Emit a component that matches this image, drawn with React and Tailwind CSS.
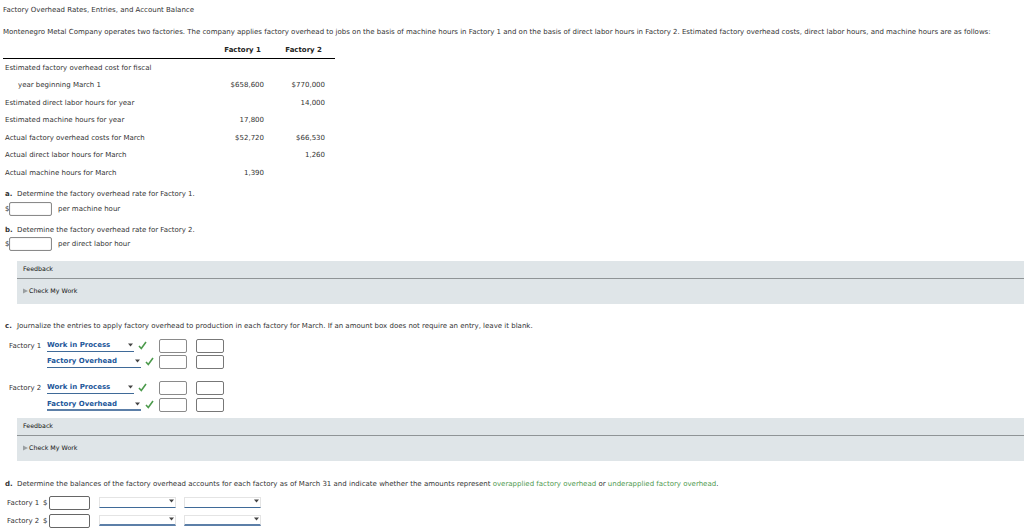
function Row({ label, a, b, indent }) {
  return (
    <div className="grid grid-cols-[200px_61px_61px] h-[17.5px] items-center">
      <span className={indent ? "pl-[15px]" : "pl-[2px]"}>{label}</span>
      <span className="text-right">{a}</span>
      <span className="text-right">{b}</span>
    </div>
  );
}

function Input() {
  return <span className="inline-block w-[43px] h-[14px] border border-[#8a8a8a] rounded-[2px] bg-white shadow-[inset_0_0_1px_#aaa]" />;
}

function Feedback() {
  return (
    <div className="ml-[17px] h-[43px] bg-[#dfe5e8] text-[#111]">
      <div className="h-[18px] pl-[6px] flex items-center border-b border-[#8f9496] text-[6.3px]">Feedback</div>
      <div className="h-[24px] pl-[6px] flex items-center gap-[1px] text-[6.3px]">
        <svg width="5" height="6" viewBox="0 0 5 6"><path d="M0 0.5L5 3L0 5.5Z" fill="#9a9fa1" /></svg>
        <span>Check My Work</span>
      </div>
    </div>
  );
}

function Account({ label, first, indent, thick }) {
  return (
    <div className="flex items-center h-[16px]">
      <span className="w-[47px] pl-[9px] text-[#333]">{first}</span>
      <span className={`${indent ? "w-[94px]" : "w-[87px]"} h-[13px] ${thick ? "border-b-2 border-[#5c7fa8]" : "border-b-[1.5px] border-[#3f6a98]"} text-[#23579a] font-bold flex items-center justify-between`}>
        <span>{label}</span>
        <svg width="5" height="4" viewBox="0 0 5 4" className="mr-[1px]"><path d="M0 0.5H5L2.5 3.5Z" fill="#444" /></svg>
      </span>
      <svg width="9" height="9" viewBox="0 0 9 9" className="ml-[4px] mr-[4px]"><path d="M1 5L3.3 7.5L8 1" fill="none" stroke="#4c9a4c" strokeWidth="1.6" /></svg>
      <span className={indent ? "w-[1px]" : "w-[8px]"} />
      <span className="inline-block w-[28px] h-[14px] border border-[#8a8a8a] rounded-[2px]" />
      <span className="inline-block w-[28px] h-[14px] border border-[#777] rounded-[2px] ml-[9px]" />
    </div>
  );
}

function Blank({ thick }) {
  return (
    <span className={`w-[77px] h-[11px] flex justify-end items-start border border-[#e4e4e4] ${thick ? "border-b-2 border-b-[#5c7fa8]" : "border-b-[1.5px] border-b-[#3f6a98]"}`}>
      <svg width="5" height="4" viewBox="0 0 5 4" className="mr-[1px] mt-[1px]"><path d="M0 0.5H5L2.5 3.5Z" fill="#444" /></svg>
    </span>
  );
}

function Balance({ label, thick }) {
  return (
    <div className="flex items-center h-[18px]">
      <span className="w-[43px] pl-[7px] text-[#333]">{label}</span>
      <span className="w-[6px]">$</span>
      <span className="inline-block w-[41px] h-[14px] border border-[#666] rounded-[2px]" />
      <span className="ml-[9px]"><Blank thick={thick} /></span>
      <span className="ml-[8px]"><Blank thick={thick} /></span>
    </div>
  );
}

function Mark({ children }) {
  return <b className="inline-block w-[12px] font-bold">{children}</b>;
}

export default function App() {
  return (
    <div className="w-[1024px] h-[530px] overflow-hidden bg-white text-[#333] text-[7px] leading-[10px] font-['DejaVu_Sans','Liberation_Sans',sans-serif]">
      <div className="pl-[3px] pt-[5px] h-[25px]">Factory Overhead Rates, Entries, and Account Balance</div>
      <div className="pl-[3px] h-[19px] pt-[2px] whitespace-nowrap">Montenegro Metal Company operates two factories. The company applies factory overhead to jobs on the basis of machine hours in Factory 1 and on the basis of direct labor hours in Factory 2. Estimated factory overhead costs, direct labor hours, and machine hours are as follows:</div>
      <div className="ml-[3px] w-[332px]">
        <div className="grid grid-cols-[200px_58px_61px] h-[15px] border-b border-black font-bold text-[#222] pb-[3px] items-center">
          <span />
          <span className="text-right">Factory 1</span>
          <span className="text-right">Factory 2</span>
        </div>
        <Row label="Estimated factory overhead cost for fiscal" />
        <Row label="year beginning March 1" indent a="$658,600" b="$770,000" />
        <Row label="Estimated direct labor hours for year" b="14,000" />
        <Row label="Estimated machine hours for year" a="17,800" />
        <Row label="Actual factory overhead costs for March" a="$52,720" b="$66,530" />
        <Row label="Actual direct labor hours for March" b="1,260" />
        <Row label="Actual machine hours for March" a="1,390" />
      </div>

      <div className="pl-[5px] mt-[7px] h-[10px]"><Mark>a.</Mark>Determine the factory overhead rate for Factory 1.</div>
      <div className="pl-[5px] mt-[2px] h-[17px] flex items-center">
        <span className="w-[4px]">$</span>
        <Input />
        <span className="ml-[6px]">per machine hour</span>
      </div>
      <div className="pl-[5px] mt-[7px] h-[10px]"><Mark>b.</Mark>Determine the factory overhead rate for Factory 2.</div>
      <div className="pl-[5px] mt-[1px] h-[17px] flex items-center">
        <span className="w-[4px]">$</span>
        <Input />
        <span className="ml-[6px]">per direct labor hour</span>
      </div>

      <div className="mt-[8px]"><Feedback /></div>

      <div className="pl-[5px] mt-[17px] h-[10px] whitespace-nowrap"><Mark>c.</Mark>Journalize the entries to apply factory overhead to production in each factory for March. If an amount box does not require an entry, leave it blank.</div>

      <div className="mt-[7px]">
        <Account first="Factory 1" label="Work in Process" />
        <Account indent label="Factory Overhead" />
        <div className="h-[10px]" />
        <Account first="Factory 2" label="Work in Process" />
        <div className="h-[1px]" />
        <Account indent thick label="Factory Overhead" />
      </div>

      <div className="mt-[5px]"><Feedback /></div>

      <div className="pl-[5px] mt-[18px] h-[10px] whitespace-nowrap"><Mark>d.</Mark>Determine the balances of the factory overhead accounts for each factory as of March 31 and indicate whether the amounts represent <span className="text-[#4f9a4f]">overapplied factory overhead</span> or <span className="text-[#4f9a4f]">underapplied factory overhead</span>.</div>

      <div className="mt-[5px]">
        <Balance label="Factory 1" />
        <Balance label="Factory 2" thick />
      </div>
    </div>
  );
}
